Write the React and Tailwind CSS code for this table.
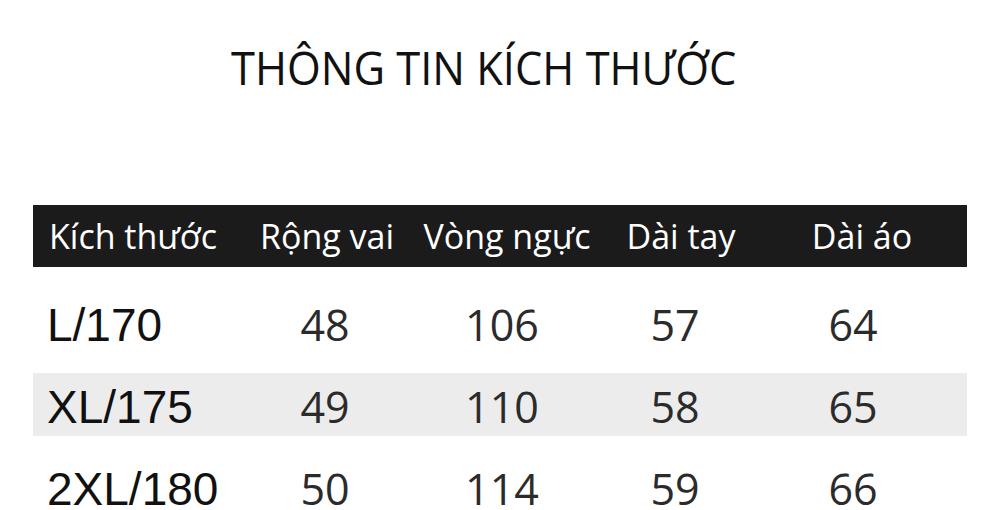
import React from "react";

const columns = ["Kích thước", "Rộng vai", "Vòng ngực", "Dài tay", "Dài áo"];

const sizes = [
  { name: "L/170", values: ["48", "106", "57", "64"] },
  { name: "XL/175", values: ["49", "110", "58", "65"] },
  { name: "2XL/180", values: ["50", "114", "59", "66"] },
];

const App = () => {
  return (
    <div className="w-[1000px] h-[510px] overflow-hidden bg-white">
      <div className="pt-[44px] pl-[231px] h-[205px]">
        <h1 className="text-[45px] leading-[48px] text-[#111] font-['Open_Sans',sans-serif] scale-x-[0.965] origin-left whitespace-nowrap">
          THÔNG TIN KÍCH THƯỚC
        </h1>
      </div>
      <div className="mx-[33px] w-[934px]">
        <div className="grid grid-cols-[207px_174px_186px_162px_200px] items-center h-[62px] bg-[#1b1b1b] text-white text-[34px] font-['Open_Sans',sans-serif]">
          {columns.map((c, i) => (
            <div key={i} className={i === 0 ? "pl-[16px] whitespace-nowrap" : "text-center whitespace-nowrap"}>
              {c}
            </div>
          ))}
        </div>
        <div className="mt-[24px] flex flex-col gap-[19px]">
          {sizes.map((s, i) => (
            <div
              key={i}
              className={`grid grid-cols-[207px_170px_184px_162px_194px] items-center h-[63px] ${i === 1 ? "bg-[#ececec]" : ""}`}
            >
              <div className="pl-[14px] text-[46px] text-[#111] font-['Liberation_Sans',sans-serif]">{s.name}</div>
              {s.values.map((v, j) => (
                <div key={j} className="text-center text-[43px] text-[#2b2b2b] font-['Open_Sans',sans-serif]">
                  {v}
                </div>
              ))}
            </div>
          ))}
        </div>
      </div>
    </div>
  );
};

export default App;
